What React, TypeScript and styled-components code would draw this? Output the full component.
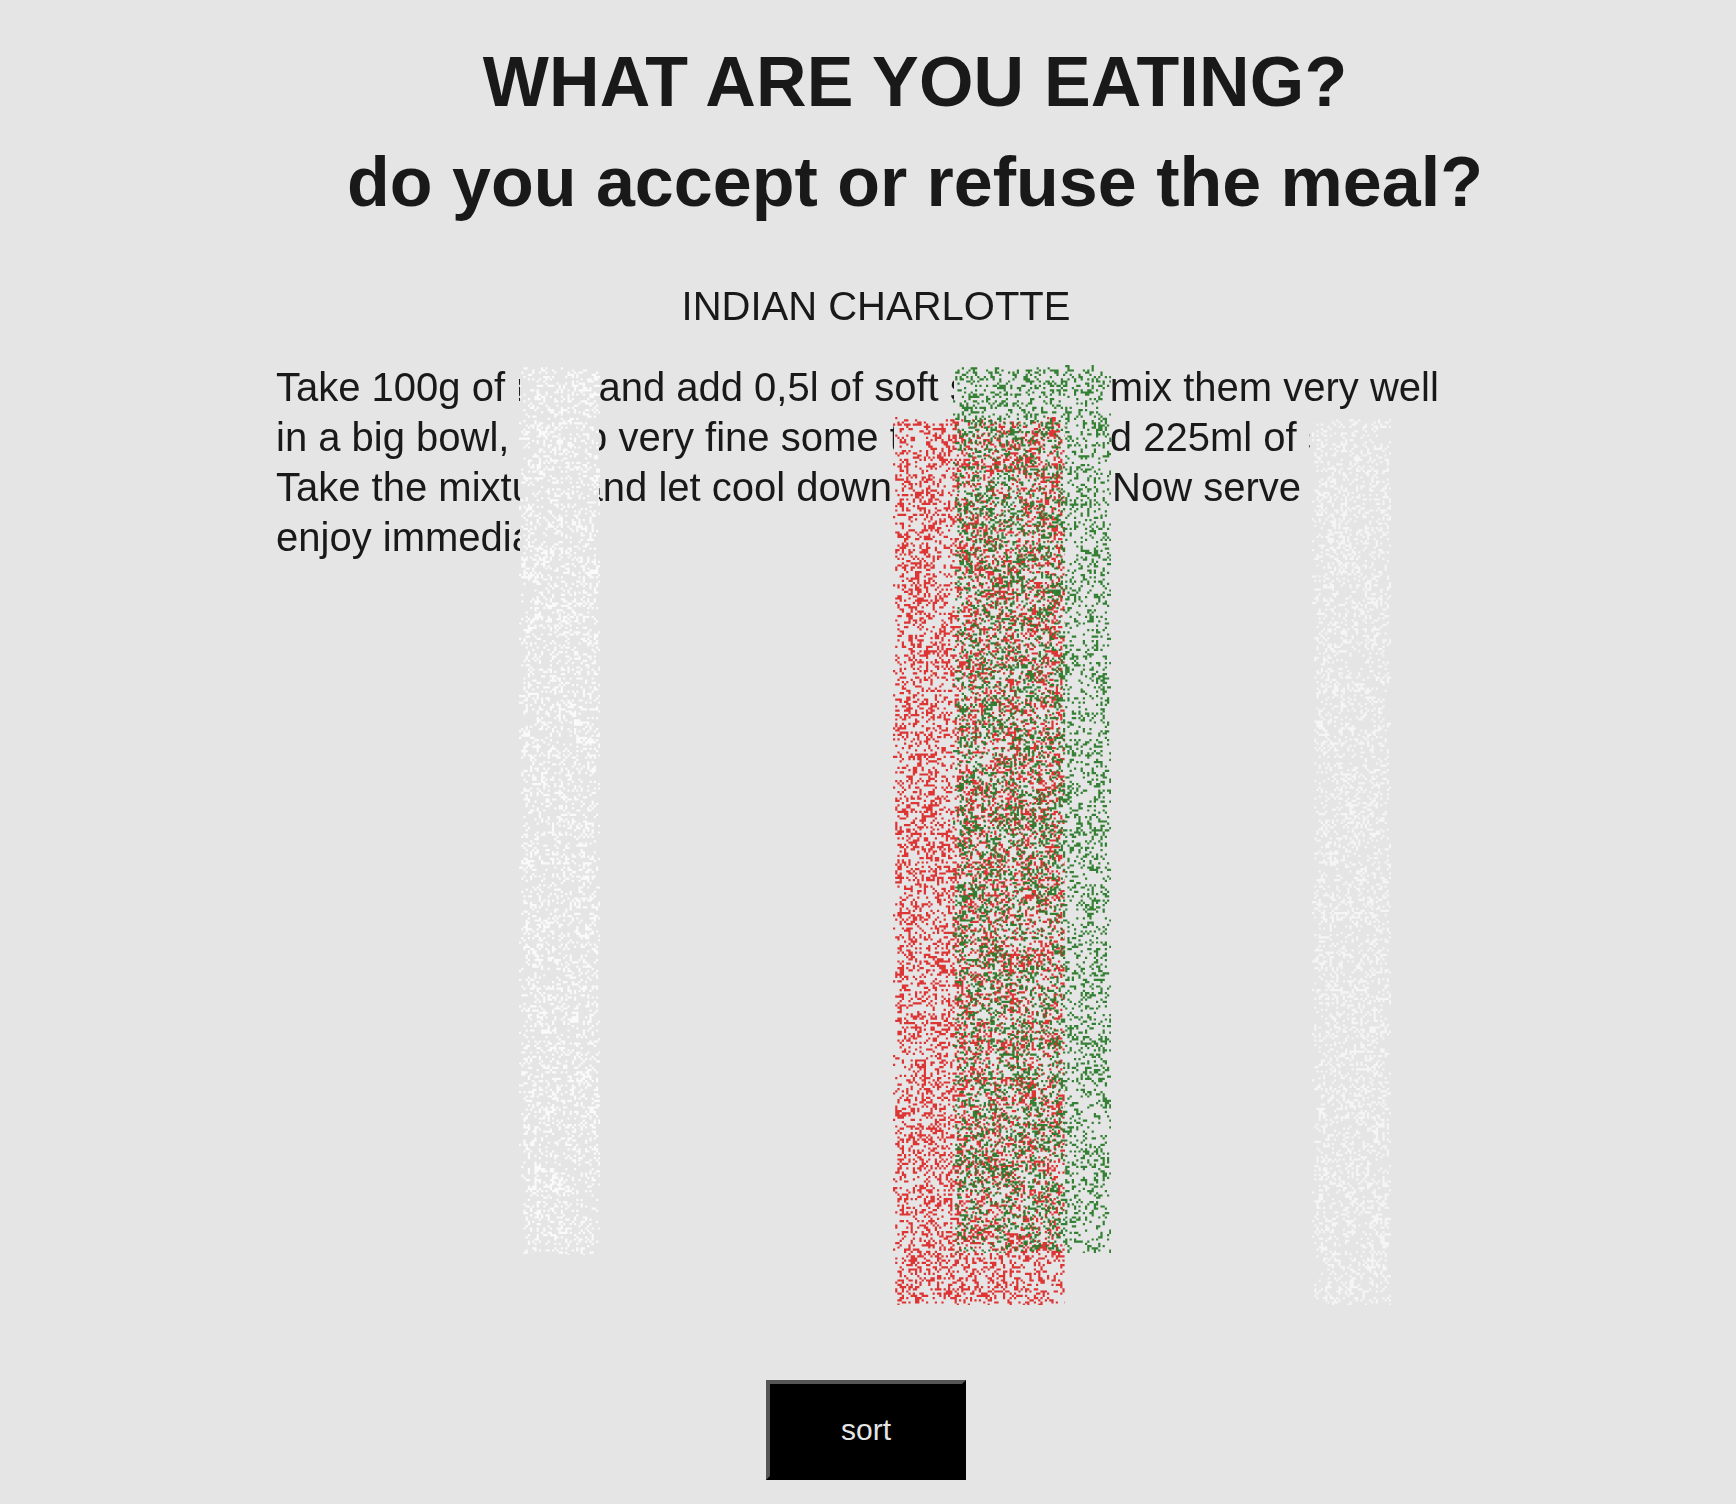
import * as React from "react";
import styled, { createGlobalStyle, css } from "styled-components";

const GlobalStyle = createGlobalStyle`
  html, body {
    margin: 0;
    padding: 0;
    background: #e5e5e5;
  }
`;

const softText = css`
  filter: blur(0.35px);
`;

const Page = styled.main`
  position: relative;
  box-sizing: border-box;
  height: 1504px;
  padding: 32px 280px 0 276px;
  overflow: hidden;
  color: #191919;
  font-family: "Liberation Sans", Arial, sans-serif;
`;

const Title = styled.h1`
  margin: 0 -198px 0 -100px;
  font-size: 70px;
  line-height: 100px;
  font-weight: 700;
  text-align: center;
  white-space: nowrap;
  ${softText}
`;

const TitleLine = styled.span<{ $spacing?: number }>`
  display: block;
  letter-spacing: ${(p) => p.$spacing ?? 0}px;
`;

const Dish = styled.h2`
  margin: 49px 0 0;
  padding-left: 20px;
  font-size: 40px;
  line-height: 50px;
  font-weight: 400;
  text-align: center;
  ${softText}
`;

const Recipe = styled.p`
  margin: 31px 0 0;
  font-size: 40px;
  line-height: 50px;
  ${softText}
`;

const Actions = styled.div`
  display: flex;
  justify-content: center;
  margin-top: 818px;
`;

const SortButton = styled.button`
  width: 200px;
  height: 100px;
  box-sizing: border-box;
  border-width: 4px;
  border-style: solid;
  border-color: #555 #000 #000 #555;
  background: #000;
  color: #e5e5e5;
  font-family: inherit;
  font-size: 30px;
`;

type Band = {
  x: number;
  y: number;
  w: number;
  h: number;
  inset: number; // dots may start a little inside the part that hides the text
  color: string;
  alpha: number;
  density: number;
  seed: number;
};

const bands: Band[] = [
  { x: 520, y: 366, w: 79, h: 888, inset: 0, color: "#ffffff", alpha: 0.8, density: 0.27, seed: 11 },
  { x: 1310, y: 418, w: 80, h: 886, inset: 3, color: "#ffffff", alpha: 0.6, density: 0.27, seed: 23 },
  { x: 894, y: 418, w: 170, h: 886, inset: 0, color: "#dc2a2a", alpha: 0.95, density: 0.32, seed: 37 },
  { x: 954, y: 366, w: 156, h: 886, inset: 0, color: "#2a7a2a", alpha: 0.95, density: 0.25, seed: 53 },
];

const PITCH = 2.2;
const PAD = 1;

// small seeded generator so the noise is the same on every render
function rng(seed: number) {
  let s = seed >>> 0;
  return () => {
    s = (s + 0x6d2b79f5) >>> 0;
    let t = s;
    t = Math.imul(t ^ (t >>> 15), t | 1);
    t ^= t + Math.imul(t ^ (t >>> 7), t | 61);
    return ((t ^ (t >>> 14)) >>> 0) / 4294967296;
  };
}

function dotPath(band: Band) {
  const rand = rng(band.seed);
  const fullW = band.w - band.inset + PAD * 2;
  const fullH = band.h + PAD * 2;
  // coarse patches make the spray denser in some places than in others
  const patches = new Map<string, number>();
  const patch = (x: number, y: number) => {
    const key = `${Math.floor(x / 14)}:${Math.floor(y / 14)}`;
    if (!patches.has(key)) patches.set(key, 0.65 + rand() * 0.7);
    return patches.get(key) as number;
  };
  let d = "";
  for (let y = 0; y < fullH; y += PITCH) {
    for (let x = 0; x < fullW; x += PITCH) {
      const edge = Math.min(x, fullW - x, y, fullH - y);
      const fade = Math.min(1, (edge + 1) / 6);
      if (rand() < band.density * fade * patch(x, y)) {
        d += `M${x.toFixed(1)} ${y.toFixed(1)}h${PITCH}v${PITCH}h-${PITCH}z`;
      }
    }
  }
  return d;
}

const Mask = styled.div<{ $band: Band }>`
  position: absolute;
  left: ${(p) => p.$band.x}px;
  top: ${(p) => p.$band.y}px;
  width: ${(p) => p.$band.w}px;
  height: ${(p) => p.$band.h}px;
  background: #e5e5e5;
`;

const Dots = styled.svg<{ $band: Band }>`
  position: absolute;
  left: ${(p) => p.$band.x + p.$band.inset - PAD}px;
  top: ${(p) => p.$band.y - PAD}px;
`;

function BandDots({ band }: { band: Band }) {
  const d = React.useMemo(() => dotPath(band), [band]);
  const w = band.w - band.inset + PAD * 2;
  const h = band.h + PAD * 2;
  return (
    <Dots $band={band} width={w} height={h} viewBox={`0 0 ${w} ${h}`}>
      <path d={d} fill={band.color} fillOpacity={band.alpha} />
    </Dots>
  );
}

export default function App() {
  return (
    <Page>
      <GlobalStyle />
      <Title>
        <TitleLine $spacing={0.2}>WHAT ARE YOU EATING?</TitleLine>
        <TitleLine>do you accept or refuse the meal?</TitleLine>
      </Title>
      <Dish>INDIAN CHARLOTTE</Dish>
      <Recipe>
        Take 100g of milk and add 0,5l of soft spinach, mix them very well in a big bowl, chop very fine some
        tomatoes and 225ml of salt. Take the mixture and let cool down in the frost. Now serve and enjoy immediately
      </Recipe>
      <Actions>
        <SortButton>sort</SortButton>
      </Actions>
      {bands.map((b) => (
        <Mask key={b.seed} $band={b} />
      ))}
      {bands.map((b) => (
        <BandDots key={b.seed} band={b} />
      ))}
    </Page>
  );
}
